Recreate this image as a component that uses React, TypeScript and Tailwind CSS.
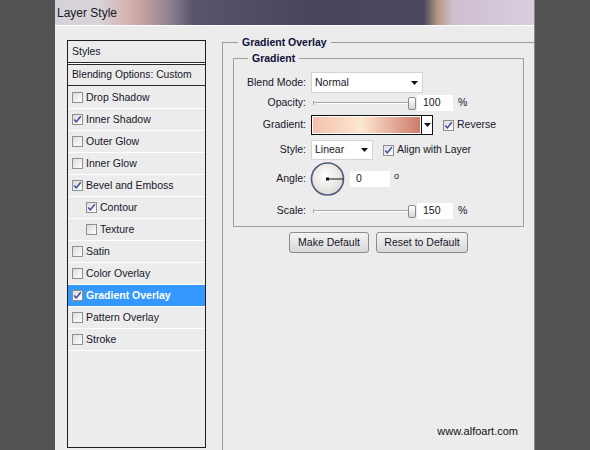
import React from 'react';

const Check = () => (
  <svg viewBox="0 0 11 11" className="w-[9px] h-[9px]">
    <path d="M1.5 5.5 L4 8.5 L9.5 1.5" fill="none" stroke="#3b4a9c" strokeWidth="1.8" />
  </svg>
);

const CheckBox: React.FC<{ checked?: boolean }> = ({ checked }) => (
  <span className="w-[11px] h-[11px] border border-[#8e8f8f] bg-gradient-to-br from-[#dcdcdc] to-white flex items-center justify-center shrink-0">
    {checked && <Check />}
  </span>
);

const Arrow = () => (
  <svg viewBox="0 0 7 4" className="w-[7px] h-[4px]">
    <path d="M0 0 H7 L3.5 4 Z" fill="#111" />
  </svg>
);

const Slider: React.FC = () => (
  <div className="relative w-[104px] h-[16px] flex items-center">
    <div className="w-[97px] ml-[3px] h-[2px] border-t border-[#a6a6a6] border-b border-b-white" />
    <div className="absolute left-[2px] top-[6px] w-px h-[4px] bg-[#a6a6a6]" />
    <div className="absolute left-[97px] top-[2px] w-[8px] h-[13px] rounded-[2px] border border-[#8a8a8a] bg-gradient-to-b from-white to-[#d6d6d6]" />
  </div>
);

const styleRows = [
  { name: 'Drop Shadow', checked: false },
  { name: 'Inner Shadow', checked: true },
  { name: 'Outer Glow', checked: false },
  { name: 'Inner Glow', checked: false },
  { name: 'Bevel and Emboss', checked: true },
  { name: 'Contour', checked: true, indent: true },
  { name: 'Texture', checked: false, indent: true },
  { name: 'Satin', checked: false },
  { name: 'Color Overlay', checked: false },
  { name: 'Gradient Overlay', checked: true, selected: true },
  { name: 'Pattern Overlay', checked: false },
  { name: 'Stroke', checked: false },
];

export default function App() {
  return (
    <div className="w-[590px] h-[450px] bg-[#535353] flex overflow-hidden font-['Liberation_Sans',sans-serif] text-[10.5px] text-[#16162a]">
      <div className="ml-[55px] w-[480px] flex flex-col border-r border-[#8a8a8a]">
        {/* title bar */}
        <div className="h-[25px] shrink-0 flex items-center pl-[2px] bg-[linear-gradient(90deg,#d4d1d8_0%,#d8d4d8_9%,#d4b4b0_15%,#c8a4a4_18%,#8e8090_24%,#58546b_29%,#47455c_55%,#4a4860_77%,#b89a82_80%,#cdbfd0_83%,#d9cdde_100%)]">
          <span className="text-[12px] text-[#17172a] leading-none">Layer Style</span>
        </div>

        {/* body */}
        <div className="flex-1 bg-[#ececec] border-t border-white flex pl-[12px] pt-[10px]">
          {/* styles list */}
          <div className="mt-[4px] w-[139px] h-[408px] border border-[#1e1e1e] flex flex-col">
            <div className="h-[22px] flex items-center pl-[4px] border-b border-[#2a2a2a]">Styles</div>
            <div className="h-px bg-white" />
            <div className="h-[22px] flex items-center pl-[4px] border-t border-[#2a2a2a] border-b text-[10.3px]">Blending Options: Custom</div>
            <div className="h-px" />
            {styleRows.map(r => (
              <div
                key={r.name}
                className={`h-[22px] flex items-center gap-[3px] border-b border-white ${r.indent ? 'pl-[18px]' : 'pl-[4px]'} ${r.selected ? 'bg-[#3399ff] text-white font-bold' : ''}`}
              >
                <CheckBox checked={r.checked} />
                <span>{r.name}</span>
              </div>
            ))}
          </div>

          {/* right side */}
          <fieldset className="ml-[16px] flex-1 border-t border-l border-[#9c9c9c] flex flex-col">
            <legend className="ml-[15px] px-[4px] font-bold leading-[13px] text-[#10103a]">Gradient Overlay</legend>

            <fieldset className="ml-[10px] mt-[3px] w-[291px] border border-[#a0a0a0] pb-[7px]">
              <legend className="ml-[14px] px-[4px] font-bold leading-[13px] text-[#10103a]">Gradient</legend>

              {/* Blend Mode */}
              <div className="mt-[7px] h-[21px] flex items-center">
                <span className="w-[72px] text-right">Blend Mode:</span>
                <div className="ml-[5px] w-[112px] h-[21px] bg-white border border-[#d4d4d4] flex items-center justify-between pl-[3px] pr-[4px]">
                  <span>Normal</span>
                  <Arrow />
                </div>
              </div>

              {/* Opacity */}
              <div className="mt-[2px] h-[16px] flex items-center">
                <span className="w-[72px] text-right">Opacity:</span>
                <div className="ml-[5px]"><Slider /></div>
                <div className="ml-[2px] w-[36px] h-[16px] bg-white flex items-center pl-[6px]">100</div>
                <span className="ml-[5px]">%</span>
              </div>

              {/* Gradient */}
              <div className="mt-[4px] h-[20px] flex items-center">
                <span className="w-[72px] text-right">Gradient:</span>
                <div className="ml-[5px] h-[20px] flex border border-[#111]">
                  <div className="w-[109px] h-full border border-white bg-[linear-gradient(90deg,#f2c2ab_0%,#f8d6c0_25%,#fde8d2_45%,#e9b5a3_70%,#cd7b6b_100%)]" />
                  <div className="w-[11px] h-full bg-white border-l border-[#111] flex items-center justify-center"><Arrow /></div>
                </div>
                <div className="ml-[10px] flex items-center gap-[3px]">
                  <CheckBox checked />
                  <span>Reverse</span>
                </div>
              </div>

              {/* Style */}
              <div className="mt-[5px] h-[20px] flex items-center">
                <span className="w-[72px] text-right">Style:</span>
                <div className="ml-[5px] w-[62px] h-[20px] bg-white border border-[#d4d4d4] flex items-center justify-between pl-[3px] pr-[4px]">
                  <span>Linear</span>
                  <Arrow />
                </div>
                <div className="ml-[10px] flex items-center gap-[3px]">
                  <CheckBox checked />
                  <span>Align with Layer</span>
                </div>
              </div>

              {/* Angle */}
              <div className="mt-[2px] h-[34px] flex items-center">
                <span className="w-[72px] text-right">Angle:</span>
                <div className="ml-[4px] w-[35px] h-[34px] relative">
                  <svg viewBox="0 0 35 34" className="w-[35px] h-[34px]">
                    <defs>
                      <radialGradient id="dial" cx="45%" cy="40%" r="60%">
                        <stop offset="0%" stopColor="#ffffff" />
                        <stop offset="100%" stopColor="#dedbd6" />
                      </radialGradient>
                    </defs>
                    <circle cx="17.5" cy="17" r="16" fill="url(#dial)" stroke="#505a7a" strokeWidth="1.6" />
                    <line x1="17.5" y1="17" x2="33.5" y2="17" stroke="#111" strokeWidth="1" />
                    <rect x="16" y="15.5" width="3" height="3" fill="#111" />
                  </svg>
                </div>
                <div className="ml-[5px] w-[40px] h-[16px] bg-white flex items-center pl-[6px]">0</div>
                <span className="ml-[4px] self-start mt-[8px] text-[9px]">o</span>
              </div>

              {/* Scale */}
              <div className="mt-[7px] h-[16px] flex items-center">
                <span className="w-[72px] text-right">Scale:</span>
                <div className="ml-[5px]"><Slider /></div>
                <div className="ml-[2px] w-[36px] h-[16px] bg-white flex items-center pl-[6px]">150</div>
                <span className="ml-[5px]">%</span>
              </div>
            </fieldset>

            {/* buttons */}
            <div className="mt-[5px] flex gap-[7px] pl-[66px]">
              <button className="w-[80px] h-[21px] rounded-[3px] border border-[#8b8b8b] bg-gradient-to-b from-[#f4f4f4] to-[#d8d8d8] text-[#16162a]">Make Default</button>
              <button className="w-[92px] h-[21px] rounded-[3px] border border-[#8b8b8b] bg-gradient-to-b from-[#f4f4f4] to-[#d8d8d8] text-[#16162a]">Reset to Default</button>
            </div>

            <div className="mt-auto self-end pr-[16px] pb-[13px] text-[11px] leading-[12px] text-[#111]">www.alfoart.com</div>
          </fieldset>
        </div>
      </div>
    </div>
  );
}
